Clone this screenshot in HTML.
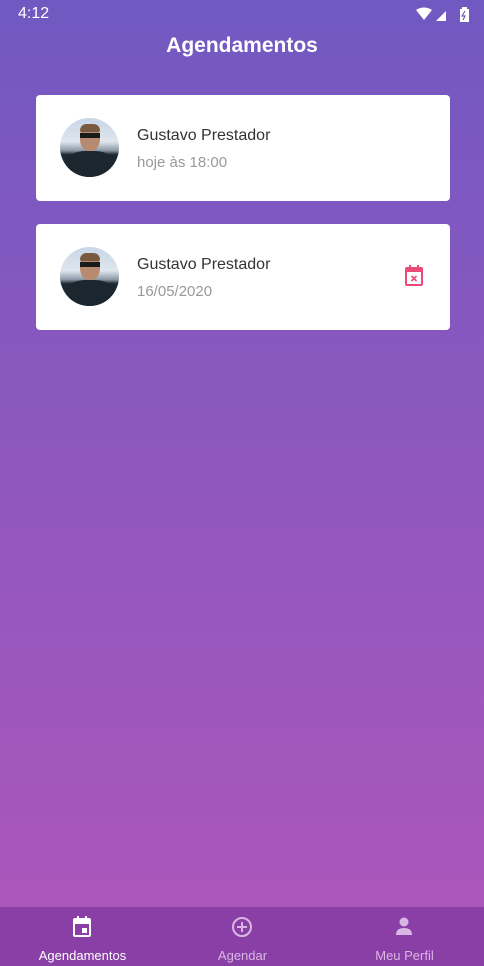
<!DOCTYPE html>
<html><head><meta charset="utf-8"><style>
*{margin:0;padding:0;box-sizing:border-box}
body{width:484px;height:966px;overflow:hidden;font-family:"Liberation Sans",sans-serif;background:linear-gradient(#7159c1,#ab56bb 907px);position:relative}
.sb{position:absolute;top:0;left:0;width:484px;height:30px;color:#fff;font-size:16px}
.title{position:absolute;top:34px;width:100%;text-align:center;color:#fff;font-weight:bold;font-size:21px}
.card{position:absolute;left:36px;width:414px;height:106px;background:#fff;border-radius:4px}
.av{position:absolute;left:24px;top:23px;width:59px;height:59px;border-radius:50%;overflow:hidden;background:linear-gradient(#c8d6e6 0,#dfe6ee 40%,#8e9aa8 55%,#1d2a33 62%,#17222b 100%)}
.av .f{position:absolute;left:20px;top:7px;width:20px;height:26px;border-radius:45%;background:#b88a70}
.av .h{position:absolute;left:20px;top:6px;width:20px;height:8px;border-radius:8px 8px 2px 2px;background:#7a5a3e}
.av .g{position:absolute;left:20px;top:15px;width:20px;height:5px;background:#1a1a1a}
.av .b{position:absolute;left:6px;top:33px;width:48px;height:30px;border-radius:40% 40% 0 0;background:#1b262e}
.n{position:absolute;left:101px;top:32px;font-size:16px;color:#333}
.d{position:absolute;left:101px;top:59px;font-size:15px;color:#999}
.tab{position:absolute;top:907px;left:0;width:484px;height:59px;background:#8a3fa6}
.t{position:absolute;top:41px;font-size:13px;color:#d9b7e3;text-align:center;width:161px}
</style></head><body>
<div class="sb"><span style="position:absolute;left:18px;top:5px">4:12</span>
<svg style="position:absolute;left:414px;top:7px" width="60" height="16"><path d="M2 3 Q10 -2 18 3 L10 13Z" fill="#fff"/><path d="M22 14 L32 4 L32 14Z" fill="#fff"/><path d="M27 14 L32 9 L32 14Z" fill="#fff" opacity=".5"/><rect x="46" y="2" width="9" height="13" fill="#fff"/><rect x="48" y="0" width="5" height="2" fill="#fff"/><path d="M51 4 L48 9 L51 9 L49 13" stroke="#7159c1" stroke-width="1.2" fill="none"/></svg></div>
<div class="title">Agendamentos</div>
<div class="card" style="top:95px"><div class="av"><div class="b"></div><div class="f"></div><div class="h"></div><div class="g"></div></div><div class="n">Gustavo Prestador</div><div class="d">hoje às 18:00</div></div>
<div class="card" style="top:224px"><div class="av"><div class="b"></div><div class="f"></div><div class="h"></div><div class="g"></div></div><div class="n">Gustavo Prestador</div><div class="d">16/05/2020</div>
<svg style="position:absolute;left:368px;top:41px" width="20" height="22" viewBox="0 0 20 22"><rect x="2" y="3" width="16" height="17" rx="1" fill="none" stroke="#e94a78" stroke-width="2"/><rect x="2" y="3" width="16" height="4" fill="#e94a78"/><rect x="5" y="0" width="2" height="4" fill="#e94a78"/><rect x="13" y="0" width="2" height="4" fill="#e94a78"/><path d="M7.5 11 L12.5 16 M12.5 11 L7.5 16" stroke="#e94a78" stroke-width="1.6"/></svg></div>
<div class="tab">
<svg style="position:absolute;left:72px;top:9px" width="20" height="22" viewBox="0 0 20 22"><rect x="2" y="3" width="16" height="17" rx="1" fill="none" stroke="#fff" stroke-width="2"/><rect x="2" y="3" width="16" height="5" fill="#fff"/><rect x="5" y="0" width="2" height="4" fill="#fff"/><rect x="13" y="0" width="2" height="4" fill="#fff"/><rect x="10" y="12" width="5" height="5" fill="#fff"/></svg>
<svg style="position:absolute;left:231px;top:9px" width="22" height="22" viewBox="0 0 22 22"><circle cx="11" cy="11" r="9" fill="none" stroke="#d9b7e3" stroke-width="2"/><path d="M11 6v10M6 11h10" stroke="#d9b7e3" stroke-width="2"/></svg>
<svg style="position:absolute;left:394px;top:9px" width="20" height="20" viewBox="0 0 20 20"><circle cx="10" cy="6" r="4.5" fill="#d9b7e3"/><path d="M2 19 Q2 12 10 12 Q18 12 18 19Z" fill="#d9b7e3"/></svg>
<div class="t" style="left:2px;color:#fff">Agendamentos</div>
<div class="t" style="left:162px">Agendar</div>
<div class="t" style="left:324px">Meu Perfil</div>
</div>
</body></html>
